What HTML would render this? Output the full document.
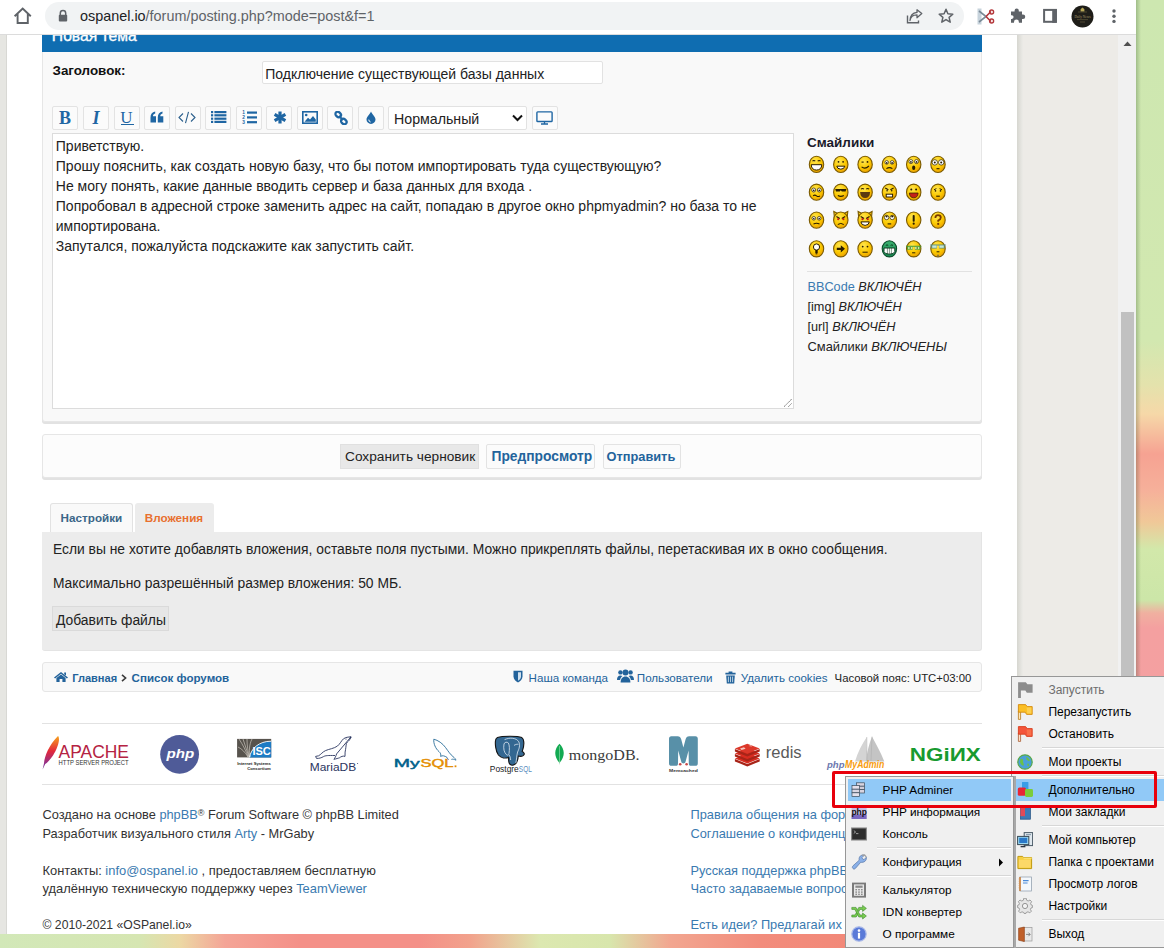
<!DOCTYPE html>
<html><head><meta charset="utf-8">
<style>
*{box-sizing:border-box}
html,body{margin:0;padding:0}
body{width:1164px;height:948px;overflow:hidden;position:relative;font-family:"Liberation Sans",sans-serif;background:#d8ecc0;color:#333}
.a{position:absolute;white-space:nowrap}
.t{position:absolute;white-space:nowrap;line-height:20px}
#desk{position:absolute;left:0;top:0;width:1164px;height:948px;overflow:hidden}
#win{position:absolute;left:0;top:0;width:1136px;height:934px;background:#edebe7;overflow:hidden}
#tb{position:absolute;left:0;top:0;width:1136px;height:35px;background:#fff;border-bottom:1px solid #dcdcdc}
#pill{position:absolute;left:45px;top:2px;width:919px;height:28px;border-radius:14px;background:#f1f3f4}
#lstrip{position:absolute;left:0;top:34px;width:7px;height:900px;background:#e6e6e2;border-right:1px solid #d8d8d4}
#wrap{position:absolute;left:7px;top:34px;width:1010px;height:900px;background:#fff}
#rshadow{position:absolute;left:1017px;top:34px;width:6px;height:900px;background:linear-gradient(to right,#d6d6d0,#ecebe7)}
#sb{position:absolute;left:1118px;top:34px;width:18px;height:900px;background:#f1f1f1}
#thumb{position:absolute;left:1120.5px;top:312px;width:13.5px;height:365px;background:#c1c1c1}
.panel{position:absolute;background:#f9f9f9;border:1px solid #e6e6e6;border-radius:3px;box-shadow:0 2px 0 #e2e2e2}
.btn{position:absolute;background:#fbfbfb;border:1px solid #e3e3e3;border-radius:2px}
</style></head><body>
<div id="desk">
  <div class="a" style="left:1136px;top:0;width:28px;height:948px;background:linear-gradient(to bottom,#cde7b0 0px,#d2e8b0 340px,#e4e2ac 385px,#f6d8a8 414px,#f6a292 454px,#f6b09a 490px,#f0c898 522px,#d2e8aa 549px,#cce6a8 600px,#f0b0a0 613px,#f4a0a0 628px,#f4a0a4 948px)"></div>
  <div class="a" style="left:1136px;top:0;width:5px;height:934px;background:linear-gradient(to right,rgba(0,40,0,.22),rgba(0,0,0,0))"></div>
  <div class="a" style="left:0;top:934px;width:1136px;height:14px;background:linear-gradient(to right,#d2e8b8 0px,#d6e6b2 140px,#ecd8a4 180px,#f4a496 225px,#f49088 300px,#f49088 420px,#f2a28c 470px,#dce8b0 540px,#d8e6ac 610px,#f2a690 670px,#f28c7c 760px,#f28878 850px,#f28878 1136px)"></div>
</div>
<div id="win">
  <div id="lstrip"></div>
  <div id="wrap"></div>
  <div id="rshadow"></div>
  <div id="sb"></div>
  <div id="thumb"></div>
</div>

<!-- main post panel -->
<div class="panel" style="left:42px;top:34px;width:940px;height:388px;border-top:0"></div>
<div class="a" style="left:42px;top:34px;width:940px;height:18px;background:#0f6db1"></div>
<div class="a" style="left:51.8px;top:26.3px;font-size:15.7px;line-height:20px;color:#fff;-webkit-text-stroke:.35px #fff">Новая тема</div>
<div class="t" style="left:52.5px;top:61.2px;font-size:13.4px;font-weight:bold;color:#111">Заголовок:</div>
<div class="a" style="left:262px;top:61px;width:341px;height:23px;background:#fff;border:1px solid #e2e2e2;border-radius:2px"></div>
<div class="t" style="left:265.3px;top:64.2px;font-size:14px;color:#222">Подключение существующей базы данных</div>

<!-- editor toolbar -->
<div class="btn" style="left:52px;top:106px;width:26px;height:24px"></div>
<div class="btn" style="left:83px;top:106px;width:26px;height:24px"></div>
<div class="btn" style="left:113.5px;top:106px;width:26px;height:24px"></div>
<div class="btn" style="left:144px;top:106px;width:26px;height:24px"></div>
<div class="btn" style="left:174.5px;top:106px;width:26px;height:24px"></div>
<div class="btn" style="left:205px;top:106px;width:26px;height:24px"></div>
<div class="btn" style="left:235.5px;top:106px;width:26px;height:24px"></div>
<div class="btn" style="left:266px;top:106px;width:26px;height:24px"></div>
<div class="btn" style="left:296.5px;top:106px;width:26px;height:24px"></div>
<div class="btn" style="left:327px;top:106px;width:26px;height:24px"></div>
<div class="btn" style="left:357.5px;top:106px;width:26px;height:24px"></div>

<div class="a" style="left:52px;top:106px;width:26px;line-height:24px;text-align:center;font-family:'Liberation Serif',serif;font-weight:bold;font-size:18px;color:#1f66a3">B</div>
<div class="a" style="left:83px;top:106px;width:26px;line-height:24px;text-align:center;font-family:'Liberation Serif',serif;font-weight:bold;font-style:italic;font-size:18px;color:#1f66a3">I</div>
<div class="a" style="left:113.5px;top:106px;width:26px;line-height:23px;text-align:center;font-family:'Liberation Serif',serif;font-size:17px;color:#1f66a3">U</div>
<div class="a" style="left:120.5px;top:123.5px;width:13px;height:1.4px;background:#1f66a3"></div>
<svg class="a" style="left:150px;top:111px" width="14" height="12" viewBox="0 0 14 12"><path d="M0.5 11.5 V6.5 C0.5 3 2 1 5.2 0.5 V2.6 C3.6 3 3 4 3 5.2 H6 V11.5 Z M7.8 11.5 V6.5 C7.8 3 9.3 1 12.5 0.5 V2.6 C10.9 3 10.3 4 10.3 5.2 H13.3 V11.5 Z" fill="#1f66a3"/></svg>
<svg class="a" style="left:178px;top:111px" width="18" height="13" viewBox="0 0 18 13"><path d="M5 2.5 L1 6.5 L5 10.5 M13 2.5 L17 6.5 L13 10.5 M10.5 0.8 L7.5 12.2" fill="none" stroke="#2b5f8c" stroke-width="1.1"/></svg>
<svg class="a" style="left:211px;top:111px" width="16" height="12" viewBox="0 0 16 12"><g fill="#1f66a3"><rect x="0" y="0" width="2.2" height="2.2"/><rect x="0" y="3.2" width="2.2" height="2.2"/><rect x="0" y="6.6" width="2.2" height="2.2"/><rect x="0" y="9.8" width="2.2" height="2.2"/><rect x="3.4" y="0" width="12" height="2.2"/><rect x="3.4" y="3.2" width="12" height="2.2"/><rect x="3.4" y="6.6" width="12" height="2.2"/><rect x="3.4" y="9.8" width="12" height="2.2"/></g></svg>
<svg class="a" style="left:242px;top:110px" width="15" height="15" viewBox="0 0 15 15"><g fill="#1f66a3"><rect x="5" y="1.5" width="10" height="2.2"/><rect x="5" y="6.3" width="10" height="2.2"/><rect x="5" y="11.1" width="10" height="2.2"/></g><text x="0.3" y="4.2" font-size="4.8" font-family="Liberation Sans" font-weight="bold" fill="#1f66a3">1</text><text x="0.3" y="9.2" font-size="4.8" font-family="Liberation Sans" font-weight="bold" fill="#1f66a3">2</text><text x="0.3" y="14.4" font-size="4.8" font-family="Liberation Sans" font-weight="bold" fill="#1f66a3">3</text></svg>
<svg class="a" style="left:272.5px;top:111px" width="14" height="13" viewBox="0 0 14 13"><g stroke="#1f66a3" stroke-width="3.2" stroke-linecap="butt"><path d="M7 0.5 V12.5"/><path d="M1.6 3.4 L12.4 9.6"/><path d="M1.6 9.6 L12.4 3.4"/></g></svg>
<svg class="a" style="left:302px;top:111px" width="16" height="13" viewBox="0 0 16 13"><rect x="0.8" y="0.8" width="14.4" height="11.4" fill="none" stroke="#1f66a3" stroke-width="1.6"/><circle cx="4.2" cy="4" r="1.3" fill="#1f66a3"/><path d="M2.5 10.8 L6 6.8 L8 8.6 L11 5 L13.8 8.5 V10.8 Z" fill="#1f66a3"/></svg>
<svg class="a" style="left:333.5px;top:110.5px" width="14" height="14" viewBox="0 0 14 14"><g fill="none" stroke="#1f66a3" stroke-width="2.2"><rect x="1.2" y="1.2" width="6" height="4.6" rx="2.3" transform="rotate(45 4.2 3.5)"/><rect x="6.8" y="8.2" width="6" height="4.6" rx="2.3" transform="rotate(45 9.8 10.5)"/></g><path d="M5 5 L9 9" stroke="#1f66a3" stroke-width="2"/></svg>
<svg class="a" style="left:366px;top:110.5px" width="10" height="13" viewBox="0 0 10 13"><path d="M5 0.5 C6 3 9.5 6.2 9.5 8.4 A4.5 4.5 0 0 1 0.5 8.4 C0.5 6.2 4 3 5 0.5 Z" fill="#1f66a3"/><path d="M2.8 8.6 A2.4 2.4 0 0 0 4.6 11" fill="none" stroke="#fff" stroke-width="1"/></svg>
<div class="a" style="left:388px;top:106px;width:139px;height:24px;background:#fff;border:1px solid #e2e2e2;border-radius:2px"></div>
<div class="t" style="left:394px;top:109px;font-size:14.2px;color:#222">Нормальный</div>
<svg class="a" style="left:512px;top:114px" width="11" height="8" viewBox="0 0 11 8"><path d="M1 1.5 L5.5 6 L10 1.5" fill="none" stroke="#111" stroke-width="2"/></svg>
<div class="btn" style="left:531.5px;top:106px;width:26px;height:24px"></div>
<svg class="a" style="left:536px;top:111px" width="17" height="14" viewBox="0 0 17 14"><rect x="0.9" y="0.9" width="15.2" height="9.6" rx="0.8" fill="none" stroke="#1f66a3" stroke-width="1.4"/><path d="M5 13 H12 M8.5 10.5 V13" stroke="#1f66a3" stroke-width="1.3"/></svg>

<!-- textarea -->
<div class="a" style="left:52px;top:133px;width:742px;height:276px;background:#fff;border:1px solid #dcdcdc"></div>
<div class="a" style="left:55.8px;top:136px;font-size:14px;line-height:20px;color:#222;white-space:pre">Приветствую.
Прошу пояснить, как создать новую базу, что бы потом импортировать туда существующую?
Не могу понять, какие данные вводить сервер и база данных для входа .
Попробовал в адресной строке заменить адрес на сайт, попадаю в другое окно phpmyadmin? но база то не
импортирована.
Запутался, пожалуйста подскажите как запустить сайт.</div>

<svg class="a" style="left:780px;top:395px" width="14" height="14" viewBox="780 395 14 14"><path d="M784.2 406.6 L791.6 399.2 M788.5 406.6 L791.6 403.4" stroke="#555" stroke-width="1" stroke-dasharray="1 .6"/></svg>
<!-- smilies column -->
<div class="t" style="left:807px;top:133px;font-size:13.5px;font-weight:bold;color:#1a1a2a">Смайлики</div>
<div class="a" style="left:807px;top:271px;width:165px;height:1px;background:#e2e2e2"></div>
<div class="t" style="left:807.5px;top:277px;font-size:12.7px;color:#222"><span style="color:#3a7ab0">BBCode</span> <i>ВКЛЮЧЁН</i></div>
<div class="t" style="left:807.5px;top:297px;font-size:12.7px;color:#222">[img] <i>ВКЛЮЧЁН</i></div>
<div class="t" style="left:807.5px;top:317px;font-size:12.7px;color:#222">[url] <i>ВКЛЮЧЁН</i></div>
<div class="t" style="left:807.5px;top:337px;font-size:12.9px;color:#222">Смайлики <i>ВКЛЮЧЕНЫ</i></div>

<!-- EMOJI -->
<svg class="a" style="left:800px;top:150px" width="160" height="112" viewBox="800 150 160 112"><defs><radialGradient id="yg" cx=".4" cy=".3" r=".8"><stop offset="0" stop-color="#ffe650"/><stop offset=".55" stop-color="#fbc800"/><stop offset="1" stop-color="#e89400"/></radialGradient><linearGradient id="gg" x1="0" y1="0" x2="0" y2="1"><stop offset="0" stop-color="#3cb070"/><stop offset="1" stop-color="#128a50"/></linearGradient></defs>
<g transform="translate(816.5 164.4)"><ellipse cx="0" cy="0" rx="7.2" ry="8.1" fill="url(#yg)" stroke="#7a5a00" stroke-width="1.1"/><path d="M-4 -3.2 Q-2.6 -4.6 -1.2 -3.2 M1.2 -3.2 Q2.6 -4.6 4 -3.2" stroke="#2a1c00" fill="none" stroke-width="1.1"/><path d="M-5.3 0.3 H5.3 Q5 5.5 0 5.7 Q-5 5.5 -5.3 0.3 Z" fill="#fff" stroke="#2a1c00" stroke-width="1"/></g>
<g transform="translate(840.8 164.4)"><ellipse cx="0" cy="0" rx="7.2" ry="8.1" fill="url(#yg)" stroke="#7a5a00" stroke-width="1.1"/><circle cx="-2.3" cy="-2.6" r="0.9" fill="#2a1c00"/><circle cx="2.3" cy="-2.6" r="0.9" fill="#2a1c00"/><path d="M-4 1.8 H4 Q3.6 4.6 0 4.8 Q-3.6 4.6 -4 1.8 Z" fill="#fff" stroke="#2a1c00" stroke-width="1"/></g>
<g transform="translate(865.1 164.4)"><ellipse cx="0" cy="0" rx="7.2" ry="8.1" fill="url(#yg)" stroke="#7a5a00" stroke-width="1.1"/><circle cx="2.4" cy="-2.5" r=".9" fill="#2a1c00"/><path d="M-3.6 -2.3 H-1.4" stroke="#2a1c00" stroke-width="1.1"/><path d="M-3.5 2.5 Q0 5.3 3.8 1.6" stroke="#2a1c00" fill="none" stroke-width="1.1"/></g>
<g transform="translate(889.4 164.4)"><ellipse cx="0" cy="0" rx="7.2" ry="8.1" fill="url(#yg)" stroke="#7a5a00" stroke-width="1.1"/><circle cx="-2.7" cy="-2.0" r="1.8" fill="#fff" stroke="#2a1c00" stroke-width=".7"/><circle cx="2.7" cy="-2.0" r="1.8" fill="#fff" stroke="#2a1c00" stroke-width=".7"/><circle cx="-2.7" cy="-1.5" r="0.9" fill="#2a1c00"/><circle cx="2.7" cy="-1.5" r="0.9" fill="#2a1c00"/><path d="M-3 4.2 Q0 2.2 3 4.2" stroke="#2a1c00" fill="none" stroke-width="1.1"/></g>
<g transform="translate(913.7 164.4)"><ellipse cx="0" cy="0" rx="7.2" ry="8.1" fill="url(#yg)" stroke="#7a5a00" stroke-width="1.1"/><circle cx="-2.8" cy="-2.8" r="2.0" fill="#fff" stroke="#2a1c00" stroke-width=".7"/><circle cx="2.8" cy="-2.8" r="2.0" fill="#fff" stroke="#2a1c00" stroke-width=".7"/><circle cx="-2.8" cy="-2.5" r="0.9" fill="#2a1c00"/><circle cx="2.8" cy="-2.5" r="0.9" fill="#2a1c00"/><ellipse cx="0" cy="3.3" rx="1.6" ry="2.2" fill="#2a1c00"/></g>
<g transform="translate(938.0 164.4)"><ellipse cx="0" cy="0" rx="7.2" ry="8.1" fill="url(#yg)" stroke="#7a5a00" stroke-width="1.1"/><circle cx="-3.2" cy="-2.0" r="2.7" fill="#fff" stroke="#2a1c00" stroke-width=".7"/><circle cx="3.2" cy="-2.0" r="2.7" fill="#fff" stroke="#2a1c00" stroke-width=".7"/><circle cx="-3.2" cy="-2.0" r="1.0" fill="#2a1c00"/><circle cx="3.2" cy="-2.0" r="1.0" fill="#2a1c00"/><path d="M-1.5 4.3 H1.5" stroke="#2a1c00" stroke-width="1.1"/></g>
<g transform="translate(816.5 192.2)"><ellipse cx="0" cy="0" rx="7.2" ry="8.1" fill="url(#yg)" stroke="#7a5a00" stroke-width="1.1"/><circle cx="-2.8" cy="-2.2" r="2.0" fill="#fff" stroke="#2a1c00" stroke-width=".7"/><circle cx="2.8" cy="-2.2" r="2.0" fill="#fff" stroke="#2a1c00" stroke-width=".7"/><circle cx="-2.8" cy="-1.9000000000000001" r="0.9" fill="#2a1c00"/><circle cx="2.8" cy="-1.9000000000000001" r="0.9" fill="#2a1c00"/><path d="M-3.4 3.6 Q-1.7 2.2 0 3.6 Q1.7 5 3.4 3.6" stroke="#2a1c00" fill="none" stroke-width="1.1"/></g>
<g transform="translate(840.8 192.2)"><ellipse cx="0" cy="0" rx="7.2" ry="8.1" fill="url(#yg)" stroke="#7a5a00" stroke-width="1.1"/><path d="M-5.6 -3.2 H5.6 L4.8 -0.6 H1 L0 -2 L-1 -0.6 H-4.8 Z" fill="#2a1c00"/><path d="M-3 3.4 Q0 5 3 3.4" stroke="#2a1c00" fill="none" stroke-width="1.1"/></g>
<g transform="translate(865.1 192.2)"><ellipse cx="0" cy="0" rx="7.2" ry="8.1" fill="url(#yg)" stroke="#7a5a00" stroke-width="1.1"/><path d="M-4 -3 Q-2.6 -4.5 -1.2 -3 M1.2 -3 Q2.6 -4.5 4 -3" stroke="#2a1c00" fill="none" stroke-width="1.1"/><path d="M-5 -0.2 H5 Q4.7 5.8 0 5.9 Q-4.7 5.8 -5 -0.2 Z" fill="#5a3a10"/></g>
<g transform="translate(889.4 192.2)"><ellipse cx="0" cy="0" rx="7.2" ry="8.1" fill="url(#yg)" stroke="#7a5a00" stroke-width="1.1"/><path d="M-4.2 -4.2 L-1 -2.4 M4.2 -4.2 L1 -2.4" stroke="#2a1c00" stroke-width="1.1"/><circle cx="-2.3" cy="-1.4" r=".8" fill="#2a1c00"/><circle cx="2.3" cy="-1.4" r=".8" fill="#2a1c00"/><rect x="-3.2" y="2" width="6.4" height="2.8" fill="#fff" stroke="#2a1c00" stroke-width="1"/></g>
<g transform="translate(913.7 192.2)"><ellipse cx="0" cy="0" rx="7.2" ry="8.1" fill="url(#yg)" stroke="#7a5a00" stroke-width="1.1"/><circle cx="-2.4" cy="-2.8" r="1.0" fill="#2a1c00"/><circle cx="2.4" cy="-2.8" r="1.0" fill="#2a1c00"/><path d="M-4.4 0.8 H4.4 Q4 5.6 0 5.6 Q-4 5.6 -4.4 0.8 Z" fill="#c42018" stroke="#2a1c00" stroke-width=".7"/></g>
<g transform="translate(938.0 192.2)"><ellipse cx="0" cy="0" rx="7.2" ry="8.1" fill="url(#yg)" stroke="#7a5a00" stroke-width="1.1"/><path d="M-4 -2.4 L-1.6 -3.6 M4 -2.4 L1.6 -3.6" stroke="#2a1c00" stroke-width="1"/><circle cx="-2.5" cy="-1.3" r="0.8" fill="#2a1c00"/><circle cx="2.5" cy="-1.3" r="0.8" fill="#2a1c00"/><path d="M-1.8 4 H1.8" stroke="#2a1c00" stroke-width="1.1"/></g>
<g transform="translate(816.5 220.1)"><ellipse cx="0" cy="0" rx="7.2" ry="8.1" fill="url(#yg)" stroke="#7a5a00" stroke-width="1.1"/><circle cx="-2.7" cy="-1.8" r="1.8" fill="#fff" stroke="#2a1c00" stroke-width=".7"/><circle cx="2.7" cy="-1.8" r="1.8" fill="#fff" stroke="#2a1c00" stroke-width=".7"/><circle cx="-2.7" cy="-1.5" r="0.8" fill="#2a1c00"/><circle cx="2.7" cy="-1.5" r="0.8" fill="#2a1c00"/><path d="M-3 3.8 Q0 2.6 3 3.8" stroke="#2a1c00" fill="none" stroke-width="1.1"/></g>
<g transform="translate(840.8 220.1)"><path d="M-7 -8.6 L-6.4 -2.6 L-3.6 -6.8 Z M7 -8.6 L6.4 -2.6 L3.6 -6.8 Z" fill="url(#yg)" stroke="#7a5a00" stroke-width="1.1"/><ellipse cx="0" cy="0" rx="7.2" ry="8.1" fill="url(#yg)" stroke="#7a5a00" stroke-width="1.1"/><path d="M-4.4 -3.6 L-1 -1.6 M4.4 -3.6 L1 -1.6" stroke="#2a1c00" stroke-width="1.1"/><circle cx="-2.6" cy="-0.9" r="1.1" fill="#c42018"/><circle cx="2.6" cy="-0.9" r="1.1" fill="#c42018"/><path d="M-3 4.4 Q0 2.2 3 4.4" stroke="#2a1c00" fill="none" stroke-width="1"/></g>
<g transform="translate(865.1 220.1)"><path d="M-7 -8.6 L-6.4 -2.6 L-3.6 -6.8 Z M7 -8.6 L6.4 -2.6 L3.6 -6.8 Z" fill="url(#yg)" stroke="#7a5a00" stroke-width="1.1"/><ellipse cx="0" cy="0" rx="7.2" ry="8.1" fill="url(#yg)" stroke="#7a5a00" stroke-width="1.1"/><path d="M-4.4 -3.6 L-1 -1.6 M4.4 -3.6 L1 -1.6" stroke="#2a1c00" stroke-width="1.1"/><circle cx="-2.6" cy="-0.9" r="1.1" fill="#c42018"/><circle cx="2.6" cy="-0.9" r="1.1" fill="#c42018"/><path d="M-4.2 1.8 H4.2 Q3.8 5.2 0 5.3 Q-3.8 5.2 -4.2 1.8 Z" fill="#fff" stroke="#2a1c00" stroke-width="1"/></g>
<g transform="translate(889.4 220.1)"><ellipse cx="0" cy="0" rx="7.2" ry="8.1" fill="url(#yg)" stroke="#7a5a00" stroke-width="1.1"/><circle cx="-2.8" cy="-2.6" r="2.2" fill="#fff" stroke="#2a1c00" stroke-width=".7"/><circle cx="2.8" cy="-2.6" r="2.2" fill="#fff" stroke="#2a1c00" stroke-width=".7"/><circle cx="-2.8" cy="-3.5" r="1.0" fill="#2a1c00"/><circle cx="2.8" cy="-3.5" r="1.0" fill="#2a1c00"/><path d="M-1.8 3.8 H1.8" stroke="#2a1c00" stroke-width="1.1"/></g>
<g transform="translate(913.7 220.1)"><ellipse cx="0" cy="0" rx="7.2" ry="8.1" fill="url(#yg)" stroke="#7a5a00" stroke-width="1.1"/><rect x="-1" y="-5" width="2" height="6.6" rx=".8" fill="#2a1c00"/><circle cx="0" cy="3.6" r="1.1" fill="#2a1c00"/></g>
<g transform="translate(938.0 220.1)"><ellipse cx="0" cy="0" rx="7.2" ry="8.1" fill="url(#yg)" stroke="#7a5a00" stroke-width="1.1"/><path d="M-2.6 -2.2 Q-2.6 -5 0 -5 Q2.8 -5 2.8 -2.6 Q2.8 -0.8 0.2 0.4 V1.6" stroke="#7a3a00" fill="none" stroke-width="1.8"/><circle cx="0.2" cy="3.8" r="1.1" fill="#7a3a00"/></g>
<g transform="translate(816.5 248.8)"><ellipse cx="0" cy="0" rx="7.2" ry="8.1" fill="url(#yg)" stroke="#7a5a00" stroke-width="1.1"/><circle cx="0" cy="-1.8" r="3.1" fill="#fff" stroke="#2a1c00" stroke-width="1"/><path d="M-1.2 1.2 V4.4 H1.2 V1.2" fill="#2a1c00"/><path d="M-0.8 5 H0.8" stroke="#2a1c00" stroke-width="1"/></g>
<g transform="translate(840.8 248.8)"><ellipse cx="0" cy="0" rx="7.2" ry="8.1" fill="url(#yg)" stroke="#7a5a00" stroke-width="1.1"/><path d="M-4 -1.1 H0 V-3.6 L4.2 0 L0 3.6 V1.1 H-4 Z" fill="#2a1c00"/></g>
<g transform="translate(865.1 248.8)"><ellipse cx="0" cy="0" rx="7.2" ry="8.1" fill="url(#yg)" stroke="#7a5a00" stroke-width="1.1"/><circle cx="-2.4" cy="-2.2" r="0.9" fill="#2a1c00"/><circle cx="2.4" cy="-2.2" r="0.9" fill="#2a1c00"/><path d="M-2.6 3.4 H2.6" stroke="#2a1c00" stroke-width="1"/></g>
<g transform="translate(889.4 248.8)"><ellipse cx="0" cy="0" rx="7.2" ry="8.1" fill="url(#gg)" stroke="#0c4a2a" stroke-width="1.1"/><path d="M-3.6 -3.4 Q-2.4 -4.4 -1.2 -3.4 M1.2 -3.4 Q2.4 -4.4 3.6 -3.4" stroke="#0c3a20" fill="none" stroke-width="1"/><path d="M-5.4 -0.8 H5.4 V2.8 Q4.6 5.4 0 5.4 Q-4.6 5.4 -5.4 2.8 Z" fill="#fff" stroke="#0c3a20" stroke-width="1"/><path d="M-2 -0.8 V5.2 M0 -0.8 V5.4 M2 -0.8 V5.2" stroke="#0c3a20" stroke-width=".5"/></g>
<g transform="translate(913.7 248.8)"><ellipse cx="0" cy="0" rx="7.2" ry="8.1" fill="url(#yg)" stroke="#7a5a00" stroke-width="1.1"/><path d="M-7.6 -3 H7.6 V-2 H6.6 V1 H1.2 V-2 H-1.2 V1 H-6.6 V-2 H-7.6 Z" fill="#4a9a30"/><rect x="-5.6" y="-2" width="4.2" height="2.4" fill="#c8f0a0"/><rect x="1.4" y="-2" width="4.2" height="2.4" fill="#c8f0a0"/><circle cx="-3.5" cy="-0.8" r=".7" fill="#2a1c00"/><circle cx="3.5" cy="-0.8" r=".7" fill="#2a1c00"/><path d="M-1.6 4 H1.6" stroke="#2a1c00" stroke-width="1"/></g>
<g transform="translate(938.0 248.8)"><ellipse cx="0" cy="0" rx="7.2" ry="8.1" fill="url(#yg)" stroke="#7a5a00" stroke-width="1.1"/><path d="M-7.8 -4.4 H7.8 V-3.4 H6.8 V-0.4 H1.2 V-3.4 H-1.2 V-0.4 H-6.8 V-3.4 H-7.8 Z" fill="#5a8a78"/><rect x="-5.8" y="-3.4" width="4.4" height="2.4" fill="#c8e8d8"/><rect x="1.4" y="-3.4" width="4.4" height="2.4" fill="#c8e8d8"/><path d="M-1.4 3 H1.4" stroke="#2a1c00" stroke-width="1"/><path d="M-1 6 L0 8.6 L1 6 Z" fill="#7a6a40"/></g>
</svg>
<!-- /EMOJI -->
<!-- submit panel -->
<div class="panel" style="left:42px;top:434px;width:940px;height:44px;background:#fcfcfc"></div>
<div class="a" style="left:340px;top:444px;width:139px;height:25px;background:#e8e8e8;border:1px solid #e0e0e0"></div>
<div class="t" style="left:345px;top:447px;font-size:13.7px;color:#222">Сохранить черновик</div>
<div class="btn" style="left:486px;top:444px;width:109px;height:25px"></div>
<div class="t" style="left:491.5px;top:447px;font-size:13.8px;font-weight:bold;color:#23639b">Предпросмотр</div>
<div class="btn" style="left:602.5px;top:444px;width:78px;height:25px"></div>
<div class="t" style="left:606.5px;top:447px;font-size:12.8px;font-weight:bold;color:#23639b">Отправить</div>

<!-- tabs -->
<div class="a" style="left:50px;top:503px;width:83px;height:30px;background:#f9f9f9;border:1px solid #e2e2e2;border-bottom:0;border-radius:3px 3px 0 0"></div>
<div class="t" style="left:60.6px;top:507.6px;font-size:11.7px;font-weight:bold;color:#3b6688">Настройки</div>
<div class="a" style="left:135px;top:503px;width:79px;height:30px;background:#ececec;border-radius:3px 3px 0 0"></div>
<div class="t" style="left:144.8px;top:507.6px;font-size:11.7px;font-weight:bold;color:#e8702f">Вложения</div>

<!-- attach panel -->
<div class="a" style="left:42px;top:532px;width:940px;height:119px;background:#ececec;border-right:1px solid #e4e4e4;border-bottom:1px solid #e4e4e4;border-radius:0 0 3px 3px"></div>
<div class="t" style="left:52.9px;top:539px;font-size:13.85px;color:#222">Если вы не хотите добавлять вложения, оставьте поля пустыми. Можно прикреплять файлы, перетаскивая их в окно сообщения.</div>
<div class="t" style="left:52.9px;top:573px;font-size:13.85px;color:#222">Максимально разрешённый размер вложения: 50 МБ.</div>
<div class="a" style="left:52px;top:606px;width:117px;height:25px;background:#e6e6e6;border:1px solid #dadada"></div>
<div class="t" style="left:56px;top:610px;font-size:13.85px;color:#222">Добавить файлы</div>

<!-- navbar -->
<div class="panel" style="left:42px;top:662px;width:940px;height:30px;box-shadow:none;border-color:#e6e6e6"></div>
<svg class="a" style="left:54px;top:672px" width="14" height="10" viewBox="0 0 14 10"><path d="M7 0 L14 5.6 L12.9 6.6 L7 1.8 L1.1 6.6 L0 5.6 Z" fill="#23639b"/><path d="M10.2 0.6 H12 V3.6 L10.2 2.2 Z" fill="#23639b"/><path d="M2.4 6 L7 2.4 L11.6 6 V10 H8.4 V7 H5.6 V10 H2.4 Z" fill="#23639b"/></svg>
<div class="t" style="left:72.2px;top:668px;font-size:11.06px;font-weight:bold;color:#23639b">Главная</div>
<svg class="a" style="left:121px;top:674px" width="6" height="8" viewBox="0 0 6 8"><path d="M1 0.8 L4.6 4 L1 7.2" fill="none" stroke="#3a3a3a" stroke-width="1.6"/></svg>
<div class="t" style="left:131.6px;top:668px;font-size:11.56px;font-weight:bold;color:#23639b">Список форумов</div>
<svg class="a" style="left:513px;top:670px" width="10" height="13" viewBox="0 0 10 13"><path d="M0.5 0.8 H9.5 V6.5 C9.5 9.5 7 11.4 5 12.4 C3 11.4 0.5 9.5 0.5 6.5 Z" fill="#23639b"/><path d="M5 2.2 H8 V6.5 C8 8.6 6.4 10 5 10.8 Z" fill="#cfe0ee"/></svg>
<svg class="a" style="left:617px;top:669px" width="17" height="14" viewBox="0 0 17 14"><g fill="#23639b"><circle cx="8.5" cy="3.6" r="3"/><path d="M3.6 13.6 C3.6 9.6 5.6 7.4 8.5 7.4 C11.4 7.4 13.4 9.6 13.4 13.6 Z"/><circle cx="3.4" cy="3.4" r="2.2"/><path d="M0 11 C0 8 1.2 6.4 3.4 6.4 C4.2 6.4 4.8 6.6 5.4 7 C4.2 8 3.4 9.4 3.1 11 Z"/><circle cx="13.6" cy="3.4" r="2.2"/><path d="M17 11 C17 8 15.8 6.4 13.6 6.4 C12.8 6.4 12.2 6.6 11.6 7 C12.8 8 13.6 9.4 13.9 11 Z"/></g></svg>
<svg class="a" style="left:724.5px;top:670.5px" width="11" height="13" viewBox="0 0 11 13"><path d="M3.6 0.5 H7.4 V1.8 H10.6 V3.6 H0.4 V1.8 H3.6 Z" fill="#23639b"/><path d="M1.2 4.4 H9.8 L9.2 12.6 H1.8 Z" fill="#23639b"/><path d="M3.4 5.6 V11.2 M5.5 5.6 V11.2 M7.6 5.6 V11.2" stroke="#c8dae8" stroke-width=".9"/></svg>
<div class="t" style="left:528.6px;top:668px;font-size:11.6px;color:#23639b">Наша команда</div>
<div class="t" style="left:636.8px;top:668px;font-size:11.6px;color:#23639b">Пользователи</div>
<div class="t" style="left:740.7px;top:668px;font-size:11.6px;color:#23639b">Удалить cookies</div>
<div class="t" style="left:834.6px;top:668px;font-size:11.36px;color:#222">Часовой пояс: UTC+03:00</div>

<!-- footer -->
<!-- LOGOS -->
<svg class="a" style="left:0;top:725px" width="1000" height="60" viewBox="0 725 1000 60">
<defs><linearGradient id="fth" x1="0" y1="0" x2="0" y2="1"><stop offset="0" stop-color="#f7a21c"/><stop offset=".45" stop-color="#e3283a"/><stop offset=".85" stop-color="#8a3090"/><stop offset="1" stop-color="#6a3a8a"/></linearGradient></defs>
<!-- apache -->
<path d="M58 736 C60.5 738.5 58 748 53 755.5 C50 760 47 763 45.2 764 L42.6 769.5 L44 763.2 C44.6 756 49 745 58 736 Z" fill="url(#fth)"/>
<text x="58.6" y="757.5" font-family="Liberation Sans" font-size="18.2" fill="#b52343" textLength="70.4" lengthAdjust="spacingAndGlyphs">APACHE</text>
<text x="58.6" y="764.8" font-family="Liberation Sans" font-size="6.6" fill="#333" textLength="70" lengthAdjust="spacingAndGlyphs">HTTP SERVER PROJECT</text>
<!-- php -->
<circle cx="179.6" cy="754.3" r="19.4" fill="#4f5b98"/>
<text x="166.4" y="758" font-family="Liberation Sans" font-weight="bold" font-style="italic" font-size="13.6" fill="#fff" textLength="27.8" lengthAdjust="spacingAndGlyphs">php</text>
<!-- ISC -->
<rect x="237.1" y="738.9" width="34.1" height="18.5" fill="#57534d"/>
<path d="M249.5 757.4 C251 748.5 259 741.2 271.2 741.2 V757.4 Z" fill="#1c7bc4"/>
<path d="M239 739 C243 745 246 751 248.4 757.4 M243 739 C245 745 247 751 249 757 M247 739 C247 746 248 752 249.5 757 M252 739 C249 745 249 751 250 757 M238 747 C242 749 245 752 248 757" stroke="#e8e2d8" stroke-width=".55" fill="none"/>
<path d="M249.5 757.4 C251 748.5 259 741.2 271.2 741.2" stroke="#fff" stroke-width=".9" fill="none"/>
<text x="252.4" y="754.5" font-family="Liberation Sans" font-weight="bold" font-size="11.5" fill="#fff" textLength="18.4" lengthAdjust="spacingAndGlyphs">ISC</text>
<text x="237.2" y="764.6" font-family="Liberation Sans" font-weight="bold" font-size="4.2" fill="#222" textLength="33.6" lengthAdjust="spacingAndGlyphs">Internet Systems</text>
<text x="247.2" y="769.6" font-family="Liberation Sans" font-weight="bold" font-size="4.2" fill="#222" textLength="23.6" lengthAdjust="spacingAndGlyphs">Consortium</text>
<!-- mariadb -->
<path d="M350.9 736.9 C348.5 736.9 345.5 737.3 343.5 738.8 C341.5 740.5 340 744 337.5 746 C334 748.6 329 749 325.5 750.6 C322.5 752 321 754.4 318.6 755.8 L315.6 756.4 L316.5 758.4 C319 758.6 321.5 757.8 323.5 756.6 C325.4 755.5 328 755.4 335 755.5 M336.6 753.9 C336 756 335 758 333.9 759.3 C336.5 758.8 338 758.2 339.3 757.9 C341 756.6 343 755.6 345 756.4 L345.1 752.1 C345.8 749 346 745.5 346.4 743.2 C347.6 741.6 349.6 740.4 350 739.1 C350.6 738.4 351 737.6 350.9 736.9 Z" stroke="#2a3560" stroke-width=".9" fill="none" stroke-linejoin="round"/>
<circle cx="346" cy="739" r=".6" fill="#2a3560"/><circle cx="350.6" cy="737.2" r=".8" fill="#2a3560"/>
<text x="309.8" y="770.6" font-family="Liberation Sans" font-size="11.3" fill="#2a3560" textLength="46.4" lengthAdjust="spacingAndGlyphs">MariaDB</text>
<circle cx="357.6" cy="763.6" r=".5" fill="#2a3560"/>
<!-- mysql -->
<path d="M433.8 739.2 C438 740.2 442.6 743.4 445.6 747.6 C448.4 751.4 450.4 754.6 453 756.6 C454.6 757.8 455.6 759 456 760.2 C454 759.2 452.6 759 451.4 759.4 M433.8 739.2 C433.4 743.8 435.6 748.6 439 751.6 C440.6 753 441.2 754.6 440.6 756.4 C442.4 755.2 444.6 755.8 447 757.4 L448.4 760" stroke="#2a6e9a" stroke-width=".9" fill="none" stroke-linejoin="round"/>
<text x="393.7" y="767.3" font-family="Liberation Sans" font-size="11.8" fill="#00618a" stroke="#00618a" stroke-width=".45" textLength="26" lengthAdjust="spacingAndGlyphs">My</text>
<text x="420.5" y="767.3" font-family="Liberation Sans" font-size="11.8" fill="#e48e00" stroke="#e48e00" stroke-width=".45" textLength="33" lengthAdjust="spacingAndGlyphs">SQL</text>
<rect x="454.6" y="765.4" width="1.8" height="1.8" fill="#e48e00"/>
<!-- postgres -->
<path d="M497.5 737.5 C502 736 517 735.6 521.8 737.6 C524.6 739.4 524.4 746 522.2 751.6 C524.5 752.6 525 754.6 523.2 755.6 C521.6 756.6 519.4 756.4 518.2 756 C518.2 759.8 516.6 765 512.2 765.2 C508.8 765.4 508.4 761 508.6 757.4 C505.6 758.6 501.2 758.2 498.4 755 C495.4 751 495 743 495.6 740.2 C495.8 739 496.4 738 497.5 737.5 Z" fill="#336791" stroke="#141414" stroke-width="1.1"/>
<path d="M504 744 C503.2 748.6 504 752.4 506.6 754.8 C507.8 755.6 508.8 755 509 753.6 C509.6 749.4 509.6 745.2 508.4 743 C507 741.6 504.6 742 504 744 Z" fill="none" stroke="#dfeaf4" stroke-width=".8"/>
<path d="M504.6 739.6 C510 737.2 516.4 737.8 518.8 741.8 C520.4 745.4 519 749 517.6 752 C516.6 755.6 516.6 760 515.8 763.2 M514 745.4 C515.6 744.4 517.2 744 518.4 744.4 M509 755 C510.2 756.4 510.6 758 510.6 760" fill="none" stroke="#dfeaf4" stroke-width=".8"/>
<text x="489.8" y="772" font-family="Liberation Sans" font-size="8.6" fill="#222" textLength="29" lengthAdjust="spacingAndGlyphs">Postgre</text>
<text x="518.8" y="772" font-family="Liberation Sans" font-size="8.6" fill="#5a8ec0" textLength="13" lengthAdjust="spacingAndGlyphs">SQL</text>
<!-- mongodb -->
<path d="M559.5 743.7 C564.2 748.4 566 755.4 559.7 762.8 L559.5 765 L559.3 762.8 C553 755.4 554.8 748.4 559.5 743.7 Z" fill="#13aa52"/>
<path d="M559.5 746 V763" stroke="#b8e6c8" stroke-width=".5"/>
<text x="568.8" y="760.2" font-family="Liberation Serif" font-size="15.6" fill="#3a3a3a" textLength="70.8" lengthAdjust="spacingAndGlyphs">mongoDB.</text>
<!-- memcached -->
<path d="M671.4 736.2 H677.6 C679.6 736.2 680.6 737.2 681.2 739.2 L683.4 747.6 L685.6 739.2 C686.2 737.2 687.2 736.2 689.2 736.2 H695.4 C697 736.2 697.8 737 697.8 738.8 V763.2 C697.8 765 697 765.8 695.2 765.8 H690.8 C689.4 765.8 688.8 765 688.8 763.4 L688.6 750.4 L685.6 761.4 C685.2 762.8 684.4 763.4 683.4 763.4 C682.4 763.4 681.6 762.8 681.2 761.4 L678.2 750.4 L678 763.4 C678 765 677.4 765.8 676 765.8 H671.6 C669.8 765.8 669 765 669 763.2 V738.8 C669 737 669.8 736.2 671.4 736.2 Z" fill="#5890a8"/>
<circle cx="680.2" cy="764.2" r="1.3" fill="#c84a4a"/><circle cx="686.6" cy="764.2" r="1.3" fill="#c84a4a"/>
<text x="669" y="772.2" font-family="Liberation Sans" font-weight="bold" font-size="4.4" fill="#333" textLength="28.8" lengthAdjust="spacingAndGlyphs">Memcached</text>
<!-- redis -->
<path d="M734.9 759 V761.4 L747.3 766.4 L759.7 761.4 V759 L747.3 764 Z" fill="#a82418"/>
<path d="M734.9 758.6 L747.3 753.6 L759.7 758.6 L747.3 763.6 Z" fill="#d82c20"/>
<path d="M734.9 754 V756.4 L747.3 761.4 L759.7 756.4 V754 L747.3 759 Z" fill="#a82418"/>
<path d="M734.9 753.6 L747.3 748.6 L759.7 753.6 L747.3 758.6 Z" fill="#d82c20"/>
<path d="M734.9 749 V751.4 L747.3 756.4 L759.7 751.4 V749 L747.3 754 Z" fill="#a82418"/>
<path d="M734.9 748.6 L747.3 743.7 L759.7 748.6 L747.3 753.6 Z" fill="#dc382a"/>
<path d="M740 748.6 L744 747.2 L745.6 748.8 L741.6 750 Z M748.6 746 L751 745.2 L752 746.4 Z" fill="#f4c8c0"/>
<text x="765.8" y="758.3" font-family="Liberation Sans" font-size="16" fill="#5a5a5a" textLength="35.8" lengthAdjust="spacingAndGlyphs">redis</text>
<!-- phpmyadmin -->
<path d="M855 761.4 C858 752 862 744 866.8 737 C866.4 746 866.8 754 868.2 761.4 Z" fill="#d4d4d4"/>
<path d="M866 761.4 C867 752 869 744 872 736.6 C876 744 880.5 752 884.3 761.4 Z" fill="#c4c4c4"/>
<path d="M866.8 737 L867 761 M872 736.6 L871 761" stroke="#aaa" stroke-width=".5"/>
<text x="827" y="768.4" font-family="Liberation Sans" font-weight="bold" font-style="italic" font-size="8.8" fill="#6c78af" textLength="17.5" lengthAdjust="spacingAndGlyphs">php</text>
<text x="845" y="768.4" font-family="Liberation Sans" font-weight="bold" font-style="italic" font-size="10.2" fill="#f89c0e" textLength="39.3" lengthAdjust="spacingAndGlyphs">MyAdmin</text>
<!-- nginx -->
<text x="909.8" y="761.4" font-family="Liberation Sans" font-weight="bold" font-size="19.2" fill="#179a30" textLength="71" lengthAdjust="spacingAndGlyphs">NGiИX</text>
</svg>

<!-- /LOGOS -->
<div class="a" style="left:42px;top:723px;width:940px;height:1px;background:#e2e2e2"></div>
<div class="a" style="left:42px;top:784px;width:940px;height:1px;background:#e2e2e2"></div>
<div class="t" style="left:42.5px;top:805px;font-size:12.8px;color:#333">Создано на основе <span style="color:#3a7ab0">phpBB</span><span style="font-size:9px;position:relative;top:-3px">®</span> Forum Software © phpBB Limited</div>
<div class="t" style="left:42.5px;top:824px;font-size:12.8px;color:#333">Разработчик визуального стиля <span style="color:#3a7ab0">Arty</span> - MrGaby</div>
<div class="t" style="left:42.5px;top:861px;font-size:12.9px;color:#333">Контакты: <span style="color:#3a7ab0">info@ospanel.io</span> , предоставляем бесплатную</div>
<div class="t" style="left:42.5px;top:879px;font-size:12.9px;color:#333">удалённую техническую поддержку через <span style="color:#3a7ab0">TeamViewer</span></div>
<div class="t" style="left:42.5px;top:915px;font-size:12.2px;color:#333">© 2010-2021 «OSPanel.io»</div>
<div class="t" style="left:690.5px;top:805px;font-size:12.8px;color:#3a7ab0">Правила общения на форуме</div>
<div class="t" style="left:690.5px;top:824px;font-size:12.8px;color:#3a7ab0">Соглашение о конфиденциальности</div>
<div class="t" style="left:690.5px;top:861px;font-size:12.8px;color:#3a7ab0">Русская поддержка phpBB</div>
<div class="t" style="left:690.5px;top:879px;font-size:12.8px;color:#3a7ab0">Часто задаваемые вопросы</div>
<div class="t" style="left:690.5px;top:915px;font-size:12.8px;color:#3a7ab0">Есть идеи? Предлагай их здесь</div>


<!-- TOOLBAR -->
<div id="tb" style="z-index:5">
  <div id="pill"></div>
  <svg class="a" style="left:0;top:0" width="40" height="34" viewBox="0 0 40 34"><path d="M14.6 16.2 L22.7 8.6 L30.8 16.2 M17.6 13.6 V23 H27.8 V13.6" fill="none" stroke="#5f6368" stroke-width="1.9" stroke-linejoin="miter"/></svg>
  <svg class="a" style="left:58px;top:9px" width="10" height="13" viewBox="0 0 10 13"><path d="M2.3 6 V4.2 A2.7 2.7 0 0 1 7.7 4.2 V6" fill="none" stroke="#5f6368" stroke-width="1.5"/><rect x="0.8" y="5.8" width="8.4" height="6.6" rx="1" fill="#5f6368"/></svg>
  <div class="a" style="left:80px;top:7px;font-size:14.4px;line-height:18px;color:#5f6368"><span style="color:#202124">ospanel.io</span>/forum/posting.php?mode=post&amp;f=1</div>
  <svg class="a" style="left:906px;top:9px" width="18" height="15" viewBox="0 0 18 15"><path d="M1.5 6.5 V13.8 H12.5 V11.5" fill="none" stroke="#5f6368" stroke-width="1.4"/><path d="M4 11.5 C4.5 7.5 7.5 5.8 11 5.8 V8.8 L15.8 4.6 L11 0.8 V3.4 C6.8 3.8 4.2 7 4 11.5 Z" fill="none" stroke="#5f6368" stroke-width="1.3" stroke-linejoin="round"/></svg>
  <svg class="a" style="left:938px;top:8px" width="16" height="16" viewBox="0 0 16 16"><path d="M8 1.3 L9.9 5.8 L14.8 6.2 L11.1 9.4 L12.2 14.2 L8 11.6 L3.8 14.2 L4.9 9.4 L1.2 6.2 L6.1 5.8 Z" fill="none" stroke="#5f6368" stroke-width="1.5" stroke-linejoin="round"/></svg>
  <svg class="a" style="left:977px;top:8px" width="18" height="17" viewBox="0 0 18 17"><rect x="0.5" y="0.5" width="4" height="16" fill="#c7d3dc"/><path d="M2 3 L9 8.5 L2 14" fill="none" stroke="#7a8a96" stroke-width="1.6"/><path d="M9 8.5 L14 3.5 M9 8.5 L14 13.5" fill="none" stroke="#b3363a" stroke-width="1.6"/><circle cx="14.6" cy="4" r="2" fill="none" stroke="#b3363a" stroke-width="1.4"/><circle cx="14.6" cy="13" r="2" fill="none" stroke="#b3363a" stroke-width="1.4"/></svg>
  <svg class="a" style="left:1000px;top:0" width="30" height="30" viewBox="1000 0 30 30"><path d="M1011 11.5 H1014.6 V10.6 A2.1 2.1 0 0 1 1018.8 10.6 V11.5 H1022 V14.4 H1023 A2.25 2.25 0 0 1 1023 18.9 H1022 V22.8 H1018.9 V22 A2.45 2.45 0 0 0 1014 22 V22.8 H1011 V18.9 H1011.8 A1.8 1.8 0 0 0 1011.8 15.3 H1011 Z" fill="#5f6368"/></svg>
  <svg class="a" style="left:1040px;top:6px" width="20" height="20" viewBox="1040 6 20 20"><rect x="1044.1" y="9.9" width="11.8" height="11.9" fill="none" stroke="#5f6368" stroke-width="2"/><rect x="1052.2" y="9" width="4.6" height="13.8" fill="#5f6368"/></svg>
  <svg class="a" style="left:1071px;top:5px" width="23" height="23" viewBox="0 0 23 23"><circle cx="11.5" cy="11.5" r="11" fill="#1e1d18"/><path d="M9.6 4.2 L11.5 2.6 L13.4 4.2 V6.4 H9.6 Z" fill="#b8a858"/><path d="M7 7 H16" stroke="#6a6240" stroke-width=".6"/><text x="3.4" y="12.6" font-family="Liberation Serif" font-size="4.6" fill="#a8986a" textLength="16.2" lengthAdjust="spacingAndGlyphs">Daily News</text><path d="M6 14.6 H17" stroke="#6a6240" stroke-width=".6"/><path d="M9 17 H14" stroke="#5a5238" stroke-width=".8"/></svg>
  <svg class="a" style="left:1111px;top:8px" width="6" height="17" viewBox="0 0 6 17"><circle cx="3" cy="3" r="1.7" fill="#5f6368"/><circle cx="3" cy="8.2" r="1.7" fill="#5f6368"/><circle cx="3" cy="13.4" r="1.7" fill="#5f6368"/></svg>
</div>
<svg class="a" style="left:1122px;top:40px;z-index:4" width="11" height="7" viewBox="0 0 11 7"><path d="M1.5 6 L5.5 1.5 L9.5 6 Z" fill="#505050"/></svg>
<!-- MENUS -->
<div class="a" style="left:1011px;top:676px;width:170px;height:272px;background:#f0f0f0;border:1px solid #979797;z-index:6"></div>
<svg class="a" style="left:1017px;top:682px;z-index:6" width="16" height="16" viewBox="0 0 16 16"><path d="M1.1 0.2 H8.8 L10.4 2.2 H15.6 V10.8 H9.8 L8.4 8.4 H3.9 V15.9 H1.1 Z" fill="#8c8c8c"/></svg>
<div class="a" style="left:1048.4px;top:679px;line-height:22px;font-size:12px;color:#6d6d6d;z-index:6">Запустить</div>
<svg class="a" style="left:1017px;top:704px;z-index:6" width="16" height="16" viewBox="0 0 16 16"><path d="M1.4 7 H3.6 V15.4 H1.4 Z" fill="#fde6b8" stroke="#b87818" stroke-width=".8"/><path d="M1.4 0.6 H8.6 L10.2 2.6 H15.2 V10.4 H9.6 L8.2 8.2 H1.4 Z" fill="#fbbf24" stroke="#d48a10" stroke-width=".9"/><path d="M9.6 3.4 H14.4 V9.6 H10.2 Z" fill="#fdd050"/></svg>
<div class="a" style="left:1048.4px;top:701px;line-height:22px;font-size:12px;color:#000;z-index:6">Перезапустить</div>
<svg class="a" style="left:1017px;top:726px;z-index:6" width="16" height="16" viewBox="0 0 16 16"><path d="M1.4 7 H3.6 V15.4 H1.4 Z" fill="#fde0c8" stroke="#a85a30" stroke-width=".8"/><path d="M1.4 0.6 H8.6 L10.2 2.6 H15.2 V10.4 H9.6 L8.2 8.2 H1.4 Z" fill="#f4553a" stroke="#d8401e" stroke-width=".9"/><path d="M9.6 3.4 H14.4 V9.6 H10.2 Z" fill="#f8704a"/></svg>
<div class="a" style="left:1048.4px;top:723px;line-height:22px;font-size:12px;color:#000;z-index:6">Остановить</div>
<div class="a" style="left:1042px;top:747px;width:130px;height:1px;background:#d7d7d7;border-bottom:1px solid #fff;height:2px;z-index:6"></div>
<svg class="a" style="left:1017px;top:754px;z-index:6" width="16" height="16" viewBox="0 0 16 16"><circle cx="8" cy="8" r="7.2" fill="#4aa0d8" stroke="#58a848" stroke-width="1.2"/><path d="M3.5 5 C5 4 6.5 5.6 6 7 C5.6 8.6 7.4 9.6 6.6 11.6 C5 12 3.4 10 3 8 Z M9 3 C11 3.4 12.6 5 12.8 7 C11.6 7.6 10.4 6.4 9.6 5.6 Z M10.4 9.6 C11.6 9.4 12.6 10.4 11.8 12 C10.8 12.6 10 11.4 10.4 9.6 Z" fill="#6cc048"/></svg>
<div class="a" style="left:1048.4px;top:751px;line-height:22px;font-size:12px;color:#000;z-index:6">Мои проекты</div>
<div class="a" style="left:1042px;top:775px;width:130px;height:1px;background:#d7d7d7;border-bottom:1px solid #fff;height:2px;z-index:6"></div>
<div class="a" style="left:1014px;top:779px;width:160px;height:22px;background:#91c9f7;z-index:6"></div>
<svg class="a" style="left:1017px;top:782px;z-index:6" width="16" height="16" viewBox="0 0 16 16"><rect x="5" y="-0.6" width="6.4" height="8.2" rx="1.4" fill="#3a9ee8"/><rect x="0.8" y="5.4" width="8.2" height="8.4" rx="1.6" fill="#e82636"/><rect x="8" y="7" width="8" height="8" rx="1.4" fill="#7ccc3a"/></svg>
<div class="a" style="left:1048.4px;top:779px;line-height:22px;font-size:12px;color:#000;z-index:6">Дополнительно</div>
<svg class="a" style="left:1017px;top:804px;z-index:6" width="16" height="16" viewBox="0 0 16 16"><rect x="3.4" y="1.6" width="10" height="13.6" fill="#3a7ab8" stroke="#1e4e80" stroke-width=".7"/><rect x="3.4" y="1.6" width="4.6" height="10.6" fill="#e04a58"/></svg>
<div class="a" style="left:1048.4px;top:801px;line-height:22px;font-size:12px;color:#000;z-index:6">Мои закладки</div>
<div class="a" style="left:1042px;top:825px;width:130px;height:1px;background:#d7d7d7;border-bottom:1px solid #fff;height:2px;z-index:6"></div>
<svg class="a" style="left:1017px;top:832px;z-index:6" width="16" height="16" viewBox="0 0 16 16"><rect x="7.2" y="0.6" width="8.4" height="13" fill="#e0e8ee" stroke="#4a5a66" stroke-width="1"/><path d="M9 2.6 H14" stroke="#8aa0b0" stroke-width="1.2"/><rect x="0.6" y="4.4" width="11.2" height="8.2" fill="#9ad8f0" stroke="#3a4a56" stroke-width="1"/><rect x="2.2" y="5.8" width="8" height="5.2" fill="#2a78c8"/><path d="M3.6 14.6 H8.4" stroke="#2a3440" stroke-width="1.4"/></svg>
<div class="a" style="left:1048.4px;top:829px;line-height:22px;font-size:12px;color:#000;z-index:6">Мой компьютер</div>
<svg class="a" style="left:1017px;top:854px;z-index:6" width="16" height="16" viewBox="0 0 16 16"><path d="M0.9 2.4 H5.6 L6.8 3.6 H14.6 V14.6 H0.9 Z" fill="#f8d040" stroke="#c09a10" stroke-width="1"/><path d="M6.6 3.6 H14.6 V5.2 H6.6 Z" fill="#fbe070"/><path d="M1.9 5.8 H13.6 V13.6 H1.9 Z" fill="#fcd868"/></svg>
<div class="a" style="left:1048.4px;top:851px;line-height:22px;font-size:12px;color:#000;z-index:6">Папка с проектами</div>
<svg class="a" style="left:1017px;top:876px;z-index:6" width="16" height="16" viewBox="0 0 16 16"><rect x="3" y="1" width="11.4" height="14" fill="#f4f8fc" stroke="#8a98a8" stroke-width=".7"/><path d="M3 1 V15" stroke="#c87830" stroke-width="1.4"/><path d="M1.6 3 H4 M1.6 5.2 H4 M1.6 7.4 H4 M1.6 9.6 H4 M1.6 11.8 H4" stroke="#d8904a" stroke-width=".6"/><path d="M6 4.6 H11.6 M6 7 H10.6" stroke="#4a8ad8" stroke-width="1.2"/></svg>
<div class="a" style="left:1048.4px;top:873px;line-height:22px;font-size:12px;color:#000;z-index:6">Просмотр логов</div>
<svg class="a" style="left:1017px;top:898px;z-index:6" width="16" height="16" viewBox="0 0 16 16"><path d="M6.8 0.8 H9.2 L9.6 2.8 L11.2 3.6 L13 2.6 L14.6 4.2 L13.6 6 L14.2 7.6 L15.4 8 V10.2 L14 10.6 L13.4 12 L14.4 13.8 L12.8 15.4 L11 14.4 L9.4 15 L9 16 H7 L6.6 15 L5 14.4 L3.2 15.4 L1.6 13.8 L2.6 12 L2 10.6 L0.6 10.2 V8 L1.8 7.6 L2.4 6 L1.4 4.2 L3 2.6 L4.8 3.6 L6.4 2.8 Z" fill="#e6e6e6" stroke="#8a8a8a" stroke-width=".8" transform="translate(0 -0.6)"/><circle cx="8" cy="8" r="2.6" fill="#f4f4f4" stroke="#8a8a8a" stroke-width=".9"/></svg>
<div class="a" style="left:1048.4px;top:895px;line-height:22px;font-size:12px;color:#000;z-index:6">Настройки</div>
<div class="a" style="left:1042px;top:919px;width:130px;height:1px;background:#d7d7d7;border-bottom:1px solid #fff;height:2px;z-index:6"></div>
<svg class="a" style="left:1017px;top:926px;z-index:6" width="16" height="16" viewBox="0 0 16 16"><rect x="6" y="1.4" width="9" height="13.6" fill="#e8e8e8" stroke="#9a9a9a" stroke-width=".7"/><path d="M1.6 2.2 L7.4 1 V15.6 L1.6 14.2 Z" fill="#c0602a" stroke="#8a3a10" stroke-width=".6"/><path d="M9 8.4 H13 M11.4 6.6 L13.2 8.4 L11.4 10.2" stroke="#7a7a7a" stroke-width=".9" fill="none"/></svg>
<div class="a" style="left:1048.4px;top:923px;line-height:22px;font-size:12px;color:#000;z-index:6">Выход</div>
<div class="a" style="left:845px;top:776px;width:169px;height:172px;background:#f0f0f0;border:1px solid #979797;box-shadow:2px 0 0 #a8a8a8;z-index:7"></div>
<div class="a" style="left:848px;top:779px;width:163px;height:22px;background:#91c9f7;z-index:7"></div>
<svg class="a" style="left:851px;top:782px;z-index:7" width="16" height="16" viewBox="0 0 16 16"><g stroke="#3a4a5a" stroke-width=".7"><rect x="5.6" y="0.8" width="8" height="3.4" fill="#d8d4e0"/><rect x="5.6" y="4.2" width="8" height="3.4" fill="#d0ccd8"/><rect x="5.6" y="7.6" width="8" height="3.4" fill="#d8d4e0"/><rect x="1" y="3.6" width="7.4" height="3.6" fill="#e4e0ea"/><rect x="1" y="7.2" width="7.4" height="3.6" fill="#dad6e2"/><rect x="1" y="10.8" width="7.4" height="3.6" fill="#e4e0ea"/></g></svg>
<div class="a" style="left:882.6px;top:779px;line-height:22px;font-size:11.8px;color:#000;z-index:7">PHP Adminer</div>
<svg class="a" style="left:851px;top:804px;z-index:7" width="16" height="16" viewBox="0 0 16 16"><rect x="0.6" y="1" width="15" height="14" fill="#b8a8e0" opacity=".7"/><rect x="0.6" y="10.6" width="15" height="4.4" fill="#7a68c0"/><text x="0.4" y="11" font-family="Liberation Sans" font-weight="bold" font-size="9.6" fill="#111" textLength="15.4" lengthAdjust="spacingAndGlyphs">php</text></svg>
<div class="a" style="left:882.6px;top:801px;line-height:22px;font-size:11.8px;color:#000;z-index:7">PHP информация</div>
<svg class="a" style="left:851px;top:826px;z-index:7" width="16" height="16" viewBox="0 0 16 16"><rect x="0.6" y="2" width="14.8" height="12" fill="#2e2e2e" stroke="#8a8a8a" stroke-width="1.1"/><path d="M2.8 4.6 L4.6 6 L2.8 7.4 M5 7.6 H7.4" stroke="#d0d0d0" stroke-width=".7" fill="none"/></svg>
<div class="a" style="left:882.6px;top:823px;line-height:22px;font-size:11.8px;color:#000;z-index:7">Консоль</div>
<div class="a" style="left:877px;top:847px;width:134px;height:2px;background:#d7d7d7;border-bottom:1px solid #fff;z-index:7"></div>
<svg class="a" style="left:998px;top:858px;z-index:7" width="6" height="9" viewBox="0 0 6 9"><path d="M1 0.5 L5 4.5 L1 8.5 Z" fill="#000"/></svg>
<svg class="a" style="left:851px;top:854px;z-index:7" width="16" height="16" viewBox="0 0 16 16"><path d="M2 14.6 C1 13.6 1.2 12.6 2 11.8 L8.2 6.2 C7.6 4.2 8.6 1.6 11.2 1 C12 0.8 12.8 1 13.4 1.2 L11 3.6 L11.6 5 L13 5.6 L15.4 3.2 C15.8 5.8 14 8.4 11 8.4 C10.6 8.4 10.2 8.4 9.8 8.2 L4.4 14.4 C3.6 15.2 2.8 15.4 2 14.6 Z" fill="#8ab0e8" stroke="#5a78a8" stroke-width=".7"/><path d="M11 1.4 L13.6 1 L15.4 3.2" fill="none" stroke="#a0a0a0" stroke-width="1.2"/></svg>
<div class="a" style="left:882.6px;top:851px;line-height:22px;font-size:11.8px;color:#000;z-index:7">Конфигурация</div>
<div class="a" style="left:877px;top:875px;width:134px;height:2px;background:#d7d7d7;border-bottom:1px solid #fff;z-index:7"></div>
<svg class="a" style="left:851px;top:882px;z-index:7" width="16" height="16" viewBox="0 0 16 16"><rect x="1" y="0.6" width="14" height="15" fill="#7a7a7a"/><rect x="3" y="2.4" width="10" height="11.4" fill="#e8e8e8"/><rect x="4.4" y="3.6" width="7.2" height="2.2" fill="#8a8a8a"/><g fill="#8a8a8a"><rect x="4.4" y="7" width="1.6" height="1.4"/><rect x="7.2" y="7" width="1.6" height="1.4"/><rect x="10" y="7" width="1.6" height="1.4"/><rect x="4.4" y="9.4" width="1.6" height="1.4"/><rect x="7.2" y="9.4" width="1.6" height="1.4"/><rect x="10" y="9.4" width="1.6" height="1.4"/><rect x="4.4" y="11.6" width="1.6" height="1.4"/><rect x="7.2" y="11.6" width="1.6" height="1.4"/><rect x="10" y="11.6" width="1.6" height="1.4"/></g></svg>
<div class="a" style="left:882.6px;top:879px;line-height:22px;font-size:11.8px;color:#000;z-index:7">Калькулятор</div>
<svg class="a" style="left:851px;top:904px;z-index:7" width="16" height="16" viewBox="0 0 16 16"><path d="M0.8 3.4 H5 L9 11 H11.6 V9 L15.4 12 L11.6 15 V13 H7.8 L3.8 5.4 H0.8 Z" fill="#7acc50" stroke="#3a8a2a" stroke-width=".6"/><path d="M0.8 11 H4 L5.4 8.6 L6.6 10.8 L5.2 13 H0.8 Z M9 5.4 L7.8 7.6 L6.6 5.4 L7.8 3.4 H11.6 V1.4 L15.4 4.4 L11.6 7.4 V5.4 Z" fill="#7acc50" stroke="#3a8a2a" stroke-width=".6"/></svg>
<div class="a" style="left:882.6px;top:901px;line-height:22px;font-size:11.8px;color:#000;z-index:7">IDN конвертер</div>
<svg class="a" style="left:851px;top:926px;z-index:7" width="16" height="16" viewBox="0 0 16 16"><circle cx="8" cy="8" r="7.2" fill="#5a7ad8" stroke="#a8b8e8" stroke-width="1.2"/><circle cx="8" cy="4.6" r="1.3" fill="#fff"/><rect x="6.9" y="6.8" width="2.2" height="5.8" fill="#fff"/></svg>
<div class="a" style="left:882.6px;top:923px;line-height:22px;font-size:11.8px;color:#000;z-index:7">О программе</div>
<div class="a" style="left:832px;top:771px;width:325px;height:37px;border:3px solid #e8000c;border-radius:2px;z-index:8"></div>
<!-- /MENUS -->
</body></html>
